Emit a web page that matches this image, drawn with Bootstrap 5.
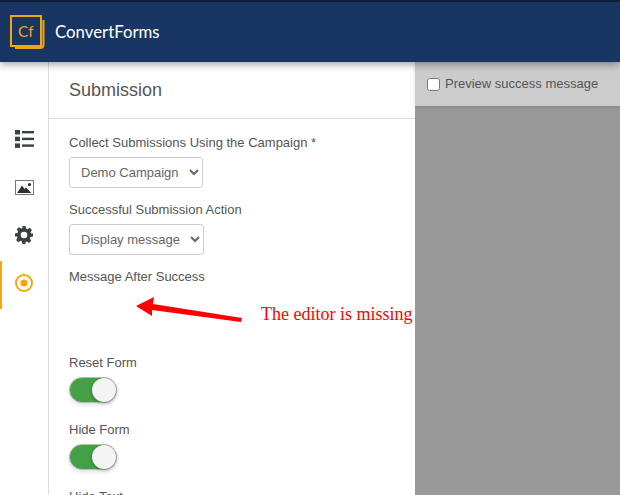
<!DOCTYPE html>
<html lang="en">
<head>
<meta charset="utf-8">
<title>ConvertForms</title>
<link rel="stylesheet" href="https://cdn.jsdelivr.net/npm/bootstrap@5.3.0/dist/css/bootstrap.min.css">
<style>
html,body{height:495px;overflow:hidden;}
body{font-family:"Liberation Sans",Arial,sans-serif;color:#555;background:#fff;font-size:13px;}
.cf-top{height:62px;background:#193563;border-top:2px solid #0e1f3c;box-shadow:0 2px 8px rgba(0,0,0,.4);position:relative;z-index:3;padding-left:10px;}
.cf-logo{width:35px;height:34px;flex:none;}
.cf-brand{font-family:"Lato",sans-serif;font-size:16.8px;color:#fff;margin-left:10px;}
.cf-body{height:433px;}
.cf-rail{width:49px;flex:none;border-right:1px solid #ddd;padding-top:55px;}
.cf-railitem{height:48px;border-left:2px solid transparent;padding-bottom:4px;padding-right:2px;}
.cf-railitem.is-on{border-left-color:#f5a60f;}
.cf-panel{width:366px;flex:none;position:relative;overflow:hidden;}
.cf-title{height:57px;border-bottom:1px solid #ddd;padding:17px 20px 0;font-size:18px;line-height:22px;color:#555;margin:0;font-weight:400;}
.cf-form{padding:15px 20px 0;}
.cf-label{display:block;line-height:17px;margin-bottom:6px;color:#555;}
.cf-sel{appearance:auto;display:block;width:auto;height:31px;padding:0 7px 0 7px;font-size:13px;color:#666;background:#fff none;border:1px solid #ccc;border-radius:3px;margin-bottom:13px;}
.cf-gap{height:63px;}
.cf-track{width:48px;height:26px;border-radius:13px;background:#43a047;border:1px solid #bbb;box-shadow:0 2px 4px rgba(0,0,0,.12);margin-bottom:18px;}
.cf-knob{width:24px;height:24px;border-radius:50%;background:#f4f4f4;box-shadow:0 1px 3px rgba(0,0,0,.35);}
.cf-note{position:absolute;left:212px;top:241px;font-family:"Liberation Serif",serif;font-size:18px;line-height:22px;color:#f00;white-space:nowrap;}
.cf-arrow{position:absolute;left:85px;top:234px;}
.cf-side{background:#999;}
.cf-preview{height:44px;background:#ccc;padding-left:12px;box-shadow:0 1px 4px rgba(0,0,0,.15);color:#555;}
.cf-check{margin:0 5px 0 0;width:13px;height:13px;}
</style>
</head>
<body>
<header class="cf-top d-flex align-items-center">
  <svg class="cf-logo" viewBox="0 0 35 34" fill="none">
    <rect x="1" y="1" width="30" height="30" stroke="#f5a60f" stroke-width="2"/>
    <path d="M33.5 5V29.5Q33.5 33 30 33H5" stroke="#f5a60f" stroke-width="2"/>
    <text x="8" y="22" font-family="Lato,sans-serif" font-size="15.5" fill="#f5a60f">Cf</text>
  </svg>
  <span class="cf-brand">ConvertForms</span>
</header>
<div class="cf-body d-flex">
  <nav class="cf-rail d-flex flex-column">
    <div class="cf-railitem d-flex align-items-center justify-content-center">
      <svg width="19" height="18" viewBox="0 0 19 18" fill="#3c4043"><rect y="0" width="5" height="4.5"/><rect y="6.7" width="5" height="4.5"/><rect y="13.4" width="5" height="4.5"/><rect x="7" y="1" width="12" height="2.4"/><rect x="7" y="7.7" width="12" height="2.4"/><rect x="7" y="14.4" width="12" height="2.4"/></svg>
    </div>
    <div class="cf-railitem d-flex align-items-center justify-content-center">
      <svg width="19" height="15" viewBox="0 0 19 15"><rect x=".5" y=".5" width="18" height="14" fill="#fff" stroke="#777"/><path d="M2 13L7 5.5 9.5 9 11 7.5 16.5 13Z" fill="#2f3134"/><circle cx="14.5" cy="4.5" r="1.6" fill="#2f3134"/></svg>
    </div>
    <div class="cf-railitem d-flex align-items-center justify-content-center">
      <svg width="18" height="18" viewBox="0 0 24 24" fill="#3c4043"><path fill-rule="evenodd" d="M10 0h4l.8 3.4 1.9.8 3-1.8 2.8 2.8-1.8 3 .8 1.9L24 10v4l-3.4.8-.8 1.9 1.8 3-2.8 2.8-3-1.8-1.9.8L14 24h-4l-.8-3.4-1.9-.8-3 1.8-2.8-2.8 1.8-3-.8-1.9L0 14v-4l3.4-.8.8-1.9-1.8-3 2.8-2.8 3 1.8 1.9-.8ZM12 7.6a4.4 4.4 0 1 0 0 8.8 4.4 4.4 0 0 0 0-8.8Z"/></svg>
    </div>
    <div class="cf-railitem is-on d-flex align-items-center justify-content-center">
      <svg width="18" height="18" viewBox="0 0 18 18" fill="none"><circle cx="9" cy="9" r="8" stroke="#f5a60f" stroke-width="2"/><circle cx="9" cy="9" r="3.6" fill="#f5a60f"/></svg>
    </div>
  </nav>
  <main class="cf-panel">
    <h1 class="cf-title">Submission</h1>
    <form class="cf-form">
      <label class="cf-label">Collect Submissions Using the Campaign *</label>
      <select class="cf-sel"><option>Demo Campaign</option></select>
      <label class="cf-label">Successful Submission Action</label>
      <select class="cf-sel"><option>Display message</option></select>
      <label class="cf-label">Message After Success</label>
      <div class="cf-gap"></div>
      <label class="cf-label">Reset Form</label>
      <div class="cf-track d-flex justify-content-end"><span class="cf-knob"></span></div>
      <label class="cf-label">Hide Form</label>
      <div class="cf-track d-flex justify-content-end"><span class="cf-knob"></span></div>
      <label class="cf-label">Hide Text</label>
    </form>
    <svg class="cf-arrow" width="110" height="32" viewBox="0 0 110 32"><path d="M2 10L20 1 19 8 108 22 107 26 18 14 18 20Z" fill="#f00"/></svg>
    <div class="cf-note">The editor is missing</div>
  </main>
  <aside class="cf-side flex-grow-1">
    <div class="cf-preview d-flex align-items-center">
      <input class="cf-check" type="checkbox" id="pv"><label for="pv">Preview success message</label>
    </div>
  </aside>
</div>
<script src="https://cdn.jsdelivr.net/npm/bootstrap@5.3.0/dist/js/bootstrap.bundle.min.js"></script>
</body>
</html>
